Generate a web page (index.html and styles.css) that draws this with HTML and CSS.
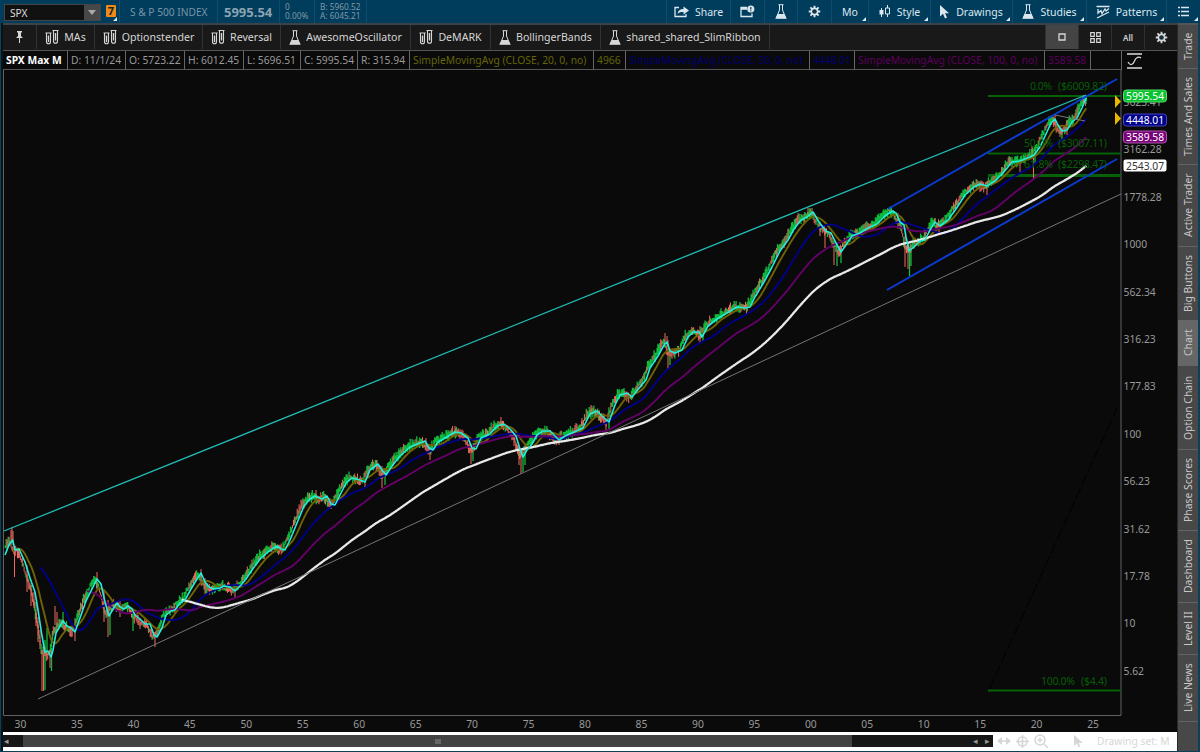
FILE: index.html
```html
<!DOCTYPE html>
<html lang="en">
<head>
<meta charset="utf-8">
<title>SPX Chart</title>
<link rel="stylesheet" href="styles.css">
</head>
<body>
<svg class="defs" width="0" height="0">
  <symbol id="flask" viewBox="0 0 12 15"><path d="M3.500.700h5M4.500 1v5L1.300 13.800h9.400L7.500 6V1" fill="none" stroke="currentColor" stroke-width="1"/><path d="M2.800 10h6.400l2.600 4.800H.2z" fill="currentColor"/></symbol>
  <symbol id="tubes" viewBox="0 0 14 16"><path d="M.5 4h6M7.500 1.500h6M1.500 4v8.700a2 2 0 004 0V4M8.500 1.500v10.800a2 2 0 004 0V1.500" fill="none" stroke="currentColor" stroke-width="1.100"/><path d="M3.500 6.500v6.500M10.500 4v7.500" stroke="currentColor" stroke-width="1.400"/></symbol>
  <symbol id="gear" viewBox="0 0 14 14"><g stroke="currentColor" stroke-width="2"><path d="M7 .8v12.4M.8 7h12.4M2.6 2.6l8.8 8.8M11.4 2.6l-8.8 8.8"/></g><circle cx="7" cy="7" r="4.2" fill="currentColor"/><circle class="hole" cx="7" cy="7" r="2.5"/></symbol>
</svg>
<div class="app">
  <header class="topbar">
    <div class="symbol-box"><span>SPX</span><i class="arrow"></i></div>
    <div class="link"><b>7</b></div>
    <div class="name">S &amp; P 500 INDEX</div>
    <div class="last">5995.54</div>
    <div class="change"><span>0</span><span>0.00%</span></div>
    <div class="bidask"><span>B: 5960.52</span><span>A: 6045.21</span></div>
    <div class="space"></div>
    <div class="btn share"><svg width="15" height="13" viewBox="0 0 15 13"><path d="M5 2.5H1v9h11V9" fill="none" stroke="currentColor" stroke-width="1.3"/><path d="M3.5 9C4 5.5 6 4 9.500 4V1.500L15 5.500 9.500 9.500V7C7 6.800 5 7.200 3.500 9z" fill="currentColor"/></svg>Share</div>
    <div class="btn alert"><svg width="15" height="13" viewBox="0 0 15 13"><path d="M7 2.500H1v9h11V8.500M1 4h6" fill="none" stroke="currentColor" stroke-width="1.3"/><circle cx="10.800" cy="4" r="3.600" fill="currentColor"/><path d="M10.800 2v2.500M10.800 5.200v1" stroke="#003c5c" stroke-width="1.2"/></svg></div>
    <div class="btn lab"><svg width="12" height="15"><use href="#flask"/></svg></div>
    <div class="btn cog"><svg width="13" height="13"><use href="#gear"/></svg></div>
    <div class="btn mo menu">Mo</div>
    <div class="btn style menu"><svg width="12" height="13" viewBox="0 0 12 13"><path d="M2.500 3v9M8.500 0v12" stroke="currentColor"/><path d="M.5 5h4v4.500h-4z" fill="currentColor"/><path d="M6.500 3h4v6h-4z" fill="#003c5c" stroke="currentColor"/></svg>Style</div>
    <div class="btn draw menu"><svg width="10" height="14" viewBox="0 0 10 14"><path d="M0 0v11.500l3-2.700L5 13.500l2-1-2-4.200h4z" fill="currentColor"/></svg>Drawings</div>
    <div class="btn studies menu"><svg width="12" height="15"><use href="#flask"/></svg>Studies</div>
    <div class="btn patterns menu"><svg width="14" height="14" viewBox="0 0 14 14"><path d="M.5 1.500h13M1 13L13 7M2 4v4l3-2.500 1 3L9 4l1 2 3-2.500" fill="none" stroke="currentColor" stroke-width="1.3"/></svg>Patterns</div>
    <div class="btn list menu"><svg width="11" height="11" viewBox="0 0 11 11"><path d="M0 1.500h2M3 1.500h8M0 5.500h2M3 5.500h8M0 9.500h2M3 9.500h8" stroke="currentColor" stroke-width="1.4"/></svg></div>
  </header>
  <div class="body">
    <main class="main">
      <nav class="toolbar">
        <div class="tool pin"><svg width="7" height="12" viewBox="0 0 7 12"><path d="M1 0h5v1L5 2v3l2 2H0l2-2V2L1 1zM3 7h1v5H3z" fill="currentColor"/></svg></div>
        <div class="tool t1"><svg width="14" height="16"><use href="#tubes"/></svg>MAs</div>
        <div class="tool t2"><svg width="14" height="16"><use href="#tubes"/></svg>Optionstender</div>
        <div class="tool t3"><svg width="14" height="16"><use href="#tubes"/></svg>Reversal</div>
        <div class="tool t4"><svg width="12" height="15"><use href="#flask"/></svg>AwesomeOscillator</div>
        <div class="tool t5"><svg width="14" height="16"><use href="#tubes"/></svg>DeMARK</div>
        <div class="tool t6"><svg width="12" height="15"><use href="#flask"/></svg>BollingerBands</div>
        <div class="tool t7"><svg width="12" height="15"><use href="#flask"/></svg>shared_shared_SlimRibbon</div>
        <div class="space"></div>
        <div class="view active"><svg width="8" height="8"><path d="M1 1h6v6H1z" fill="none" stroke="currentColor" stroke-width="1.300"/></svg></div>
        <div class="view"><svg width="11" height="11"><path d="M.7.700h3.600v3.600H.7zM6.700.700h3.600v3.600H6.700zM.7 6.700h3.600v3.600H.7zM6.700 6.700h3.600v3.600H6.700z" fill="none" stroke="currentColor" stroke-width="1.200"/></svg></div>
        <div class="view all">All</div>
        <div class="view"><svg width="13" height="13"><use href="#gear"/></svg></div>
      </nav>
      <div class="info">
        <b class="i0">SPX Max M</b><span class="i1">D: 11/1/24</span><span class="i2">O: 5723.22</span><span class="i3">H: 6012.45</span><span class="i4">L: 5696.51</span><span class="i5">C: 5995.54</span><span class="i6">R: 315.94</span><span class="i7 olive">SimpleMovingAvg (CLOSE, 20, 0, no)</span><span class="i8 olive">4966</span><span class="i9 navy">SimpleMovingAvg (CLOSE, 50, 0, no)</span><span class="i10 navy">4448.01</span><span class="i11 plum">SimpleMovingAvg (CLOSE, 100, 0, no)</span><span class="i12 plum">3589.58</span><span class="i13"></span>
        <div class="scale"><svg width="15" height="16"><path d="M0 1h15M0 15h15" stroke="currentColor" stroke-width="1.600"/><path d="M1 9c2 4 5 3 6.500-1S12 3.500 14 5" fill="none" stroke="currentColor" stroke-width="1.200"/></svg></div>
      </div>
      <svg class="chart" id="chart" width="1174" height="662" viewBox="3 70 1174 662">
        <path d="M3.500 70V715.500H1121V70" class="frame"/>
        <path d="M989 690L1117 408" class="ghost"/>
        <g class="fib"><path d="M988 96h133M988 153.500h133M988 690.500h133"/><path d="M988 175.500h133" class="thick"/></g>
        <g id="candles"></g>
        <g id="averages"></g>
        <path d="M38 699L1121 194" class="support"/>
        <path d="M4 531L1086 95" class="resist"/>
        <path d="M888 209L1117 79M887 290L1117 159" class="channel"/>
        <path d="M1055 115L1085 121" class="support"/>
        <g class="fibtext"><text x="1030" y="90" textLength="22">0.0%</text><text x="1058" y="90" textLength="49">($6009.82)</text><text x="1024" y="147" textLength="29">50.0%</text><text x="1058" y="147" textLength="49">($3007.11)</text><text x="1024" y="168" textLength="29">61.8%</text><text x="1058" y="168" textLength="49">($2298.47)</text><text x="1041" y="685" textLength="34">100.0%</text><text x="1081" y="685" textLength="26">($4.4)</text></g>
        <path d="M1115 95l6 6.500-6 6.500zM1115 112l6 6.500-6 6.500z" fill="#e8b800"/>
        <g class="axis" id="axis"></g>
        <g class="tags">
          <rect x="1123.500" y="90" width="43" height="12" rx="3" fill="#08c22e" stroke="#54dc6c"/><text x="1126" y="100">5995.54</text>
          <rect x="1123.500" y="114" width="43" height="12" rx="3" fill="#00008c" stroke="#4545b8"/><text x="1126" y="124">4448.01</text>
          <rect x="1123.500" y="131" width="43" height="12" rx="3" fill="#780078" stroke="#ad55ad"/><text x="1126" y="141">3589.58</text>
          <rect x="1123.500" y="159.500" width="43" height="12" rx="2" fill="#fff"/><text x="1126" y="169.500" class="dark">2543.07</text>
        </g>
      </svg>
      <footer class="bottom">
        <div class="scroll"><i class="left">◂</i><div class="thumb"><i></i></div><div class="rest"><i>◂</i><i>▸</i></div></div>
        <div class="drawset">
          <svg width="90" height="16" viewBox="0 0 90 16"><g fill="none" stroke="#d6d6d6" stroke-width="1.500"><path d="M3 8h9"/><circle cx="25.500" cy="8.500" r="4.500"/><path d="M25.500 2v13M19 8.500h13"/><circle cx="43" cy="7" r="5"/><path d="M47 11l4 4M40.500 7h5M43 4.500v5"/></g><path d="M5 4L0 8l5 4zM9 4l5 4-5 4zM77 2v11l2.800-2.400 1.800 3.700 1.800-.8-1.700-3.600H86z" fill="#d6d6d6"/></svg>
          <span>Drawing set: M</span>
        </div>
      </footer>
    </main>
    <aside class="tabs">
      <div class="tab a">Trade</div><div class="tab b">Times And Sales</div><div class="tab c">Active Trader</div><div class="tab d">Big Buttons</div><div class="tab e on">Chart</div><div class="tab f">Option Chain</div><div class="tab g">Phase Scores</div><div class="tab h">Dashboard</div><div class="tab i">Level II</div><div class="tab j">Live News</div>
    </aside>
  </div>
</div>
<script src="chart.js"></script>
</body>
</html>
```
FILE: styles.css
```css
* { box-sizing: border-box; }
body { margin: 0; background: #0a0a0a; font-family: "Noto Sans", "Open Sans", sans-serif; font-size: 10.600px; color: #d6d6d6; overflow: hidden; }
.defs { position: absolute; }
svg { flex: none; }
.app { width: 1200px; height: 752px; display: flex; flex-direction: column; background: #0a4058; }
.topbar { height: 23px; display: flex; align-items: stretch; background: #003c5c; padding-left: 4px; }
.topbar > div { border-right: 1px solid #124c6c; }
.topbar .symbol-box { width: 97px; height: 17px; margin-top: 4px; background: #111; border: 1px solid #444; display: flex; justify-content: space-between; align-items: center; padding-left: 5px; font-size: 10.200px; color: #ddd; }
.arrow { width: 16px; height: 15px; background: #484848; display: flex; align-items: center; justify-content: center; }
.arrow::before { content: ""; border: 4px solid transparent; border-top: 5px solid #aaa; border-bottom: 0; }
.link { width: 19px; padding: 5px 0 0 5px; position: relative; }
.link b { display: block; width: 10px; height: 12px; line-height: 12px; background: #f28a16; color: #16242d; text-align: center; border-radius: 1px; font-size: 11px; }
.link::after, .menu::after { content: ""; position: absolute; right: 2px; bottom: 2px; border-left: 4px solid transparent; border-bottom: 4px solid #d8e8f0; }
.name { width: 98px; padding-left: 10px; line-height: 24px; color: #7895a7; font-size: 10.200px; white-space: nowrap; }
.last { width: 62px; line-height: 25px; padding-left: 6px; font-size: 13px; font-weight: bold; color: #8ba3b1; }
.change, .bidask { display: flex; flex-direction: column; font-size: 8.300px; line-height: 9px; padding: 2px 0 0 5px; color: #8098a6; }
.change { width: 35px; }
.bidask { width: 52px; white-space: nowrap; }
.space { flex: 1; }
.topbar .btn { display: flex; align-items: center; justify-content: center; gap: 6px; position: relative; color: #dbe7ee; font-size: 10.500px; white-space: nowrap; }
.share { width: 64px; } .alert { width: 34px; } .lab { width: 33px; } .cog { width: 34px; } .mo { width: 37px; }
.style { width: 62px; } .draw { width: 82px; } .studies { width: 74px; } .patterns { width: 80px; } .topbar .list { width: 33px; border: 0; }
.hole { fill: #123242; }
.toolbar .hole { fill: #191919; }
.body { flex: 1; display: flex; min-height: 0; padding: 0 2px 1px 1px; }
.main { width: 1176px; flex: none; display: flex; flex-direction: column; padding-left: 2px; background: #0a1418; }
.toolbar { height: 28px; display: flex; background: #191919; border-top: 2px solid #3b4248; border-bottom: 1px solid #555; padding-bottom: 1px; }
.tool { border-right: 1px solid #333; display: flex; align-items: center; justify-content: center; gap: 5px; white-space: nowrap; }
.pin { width: 34px; } .t1 { width: 58px; } .t2 { width: 108px; } .t3 { width: 78px; } .t4 { width: 130px; } .t5 { width: 80px; } .t6 { width: 110px; } .t7 { width: 169px; }
.view { width: 33px; border-left: 1px solid #303030; display: flex; align-items: center; justify-content: center; }
.view.active { background: #444; }
.all { font-size: 8px; font-weight: 600; }
.info { height: 19px; display: flex; background: #0a0a0a; line-height: 18px; color: #999; font-size: 10.300px; }
.info b, .info span { border-right: 1px solid #666; border-bottom: 1px solid #555; padding-left: 3px; white-space: nowrap; overflow: hidden; }
.info b { color: #fff; }
.i0 { width: 65px; } .i1 { width: 58px; } .i2 { width: 59px; } .i3 { width: 59px; } .i4 { width: 57px; } .i5 { width: 57px; } .i6 { width: 52px; }
.i7 { width: 184px; } .i8 { width: 32px; } .i9 { width: 184px; } .i10 { width: 45px; } .i11 { width: 190px; } .i12 { width: 46px; } .i13 { width: 31px; }
.olive { color: #646408; } .navy { color: #000070; } .plum { color: #5c005c; }
.scale { flex: 1; padding: 2px 0 0 5px; color: #ddd; line-height: 0; }
.chart { display: block; background: #0a0a0a; }
.chart path { fill: none; }
.chart path[fill] { fill: #e8b800; }
.chart .frame { stroke: #606060; }
.ghost { stroke: #000; stroke-width: 1.200; stroke-dasharray: 12 3; opacity: .75; }
.fib { stroke: #076107; stroke-width: 2; } .thick { stroke-width: 3; }
.support { stroke: #757575; }
.resist { stroke: #20bdb5; stroke-width: 1.300; }
.channel { stroke: #0a3bd2; stroke-width: 2; }
.fibtext { fill: #075d07; font-size: 10.500px; }
.axis { fill: #999; font-size: 10.300px; }
.tags { fill: #fff; font-size: 10.300px; } .tags .dark { fill: #333; }
.bottom { height: 19px; background: #fff; display: flex; align-items: flex-start; padding-top: 3px; }
.scroll { width: 990px; height: 12px; background: #171717; display: flex; font-size: 9px; line-height: 11px; color: #999; }
.scroll i { font-style: normal; }
.left { width: 20px; padding-left: 1px; }
.thumb { width: 829px; background: #424242; display: flex; justify-content: center; align-items: center; }
.thumb i { width: 6px; height: 5px; background: #666; }
.rest { flex: 1; display: flex; justify-content: flex-end; gap: 7px; padding-right: 3px; }
.drawset { flex: 1; height: 16px; display: flex; align-items: center; gap: 10px; padding-left: 4px; margin-top: -2px; color: #d6d6d6; white-space: nowrap; font-size: 10.300px; }
.tabs { flex: 1; background: #484848; border-left: 1px solid #292929; border-top: 2px solid #555; }
.tab { writing-mode: vertical-rl; transform: rotate(180deg); width: 100%; display: flex; align-items: center; justify-content: center; border-top: 1px solid #646464; line-height: 18px; color: #c7c7c7; font-size: 10.400px; white-space: nowrap; }
.on { background: #666; }
.a { height: 44px; } .b { height: 96px; } .c { height: 82px; } .d { height: 74px; } .e { height: 45px; } .f { height: 84px; } .g { height: 81px; } .h { height: 72px; } .i { height: 52px; } .j { height: 67px; }
```
FILE: chart.js
```javascript
const NS = "http://www.w3.org/2000/svg";
// Fast average of the index, as x,y knots on the log scale
const fast = `-6,568 5,555 9,545 12.700,540 15,550 19,549 25,562 30,578 35,592 38,610 42,636 45,652 48,651 51,657 53,650 56,633 60,626 63,621 67,626 71,628 75,632 80,618 86,601 91,591 97,579 101,584 105,602 109,616 113,609 117,603 120,607 124,609 128,606 132,609 135,615 140,619 145,624 150,624 154,635 157,637 162,628 166,615 171,611 175,610 180,603 185,600 191,589 197,579 201,573 205,582 209,587 214,589 220,588 224,586 230,587 235,591 241,585 246,579 252,570 260,559 268,552 277,546 281,549 285,550 290,540 297,523 304,506 310,499 315,496 322,499 327,496 331,504 335,505 340,495 346,483 352,478 360,480 365,482 370,470 378,464 382,470 386,475 392,466 400,456 410,447 420,443 425,441 429,448 433,450 438,442 447,437 455,432 461,433 468,438 472,448 476,449 481,438 490,434 497,426 504,424 510,429 516,436 520,449 523,457 527,450 532,444 537,435 543,431 550,431 556,437 559,440 565,436 572,433 583,428 590,414 597,411 603,417 609,422 615,405 620,395 627,393 632,397 640,387 646,380 650,368 658,356 664,345 667,342 670,351 675,353 682,350 688,337 693,332 699,332 702,337 708,326 717,319 727,313 737,307 745,308 750,307 755,297 764,282 772,267 780,251 788,240 794,229 801,220 807,217 813,212 819,222 826,231 831,233 836,243 841,252 846,245 852,236 860,233 868,228 877,224 885,216 892,211 896,213 900,222 904,225 906,237 909,251 914,247 920,241 925,240 930,230 935,222 940,226 948,220 956,209 965,195 974,187 980,184 987,186 995,181 1003,173 1012,162 1020,161 1030,157 1034,155 1040,147 1046,134 1051,123 1055,119 1058,125 1062,131 1067,130 1072,122 1077,118 1082,108 1086,98`
  .split(" ").map(p => p.split(",").map(Number));
function at(x) {
  for (let i = 1; i < fast.length; i++) {
    if (x <= fast[i][0]) {
      const [a, b] = fast[i - 1], [c, d] = fast[i];
      return b + (d - b) * (x - a) / (c - a);
    }
  }
  return fast[fast.length - 1][1];
}
// Notable swings: x, top, bottom, direction (1 = up month)
const swings = [[11,530,542,0],[12,527,540,0],[13,531,545,0],[14.500,552,577,0],[27,565,592,0],[31,585,606,0],[34,592,608,0],[36,602,626,0],[38,617,642,0],[40,630,649,0],[42,650,691,0],[43.500,655,691,0],[45,640,690,1],[47,628,655,1],[50,650,668,0],[51.500,648,671,1],[55,606,625,0],[57,612,630,0],[63,612,622,1],[70,626,636,0],[75,630,641,0],[97,572,580,0],[104,590,622,0],[108,600,637,0],[110,615,635,1],[120,600,617,0],[133,613,631,1],[155,632,647,0],[201,569,577,0],[205,578,594,0],[235,587,598,0],[316,490,499,0],[331,500,509,0],[365,480,487,0],[377,460,467,1],[382,466,488,0],[385,472,485,1],[426,438,447,0],[430,447,460,0],[455,426,434,0],[471,444,464,0],[473,447,461,1],[501,417,426,0],[514,433,446,0],[519,446,465,0],[521,450,474,0],[523,452,472,1],[525,448,465,1],[559,436,445,0],[582,418,430,0],[591,405,415,0],[606,420,430,0],[609,418,429,1],[665,333,344,0],[667,336,346,0],[668,340,369,0],[670,355,365,1],[700,326,343,0],[703,333,341,1],[808,208,217,0],[812,208,214,0],[820,223,236,0],[825,230,248,0],[834,243,265,0],[837,250,266,1],[841,252,263,1],[898,213,224,0],[905,236,267,0],[908,246,269,0],[909.500,248,276,1],[911,246,266,1],[935,218,224,0],[939,224,233,0],[980,184,192,0],[987,187,195,0],[1010,157,166,0],[1020,162,172,0],[1032,146,157,0],[1033.500,158,178,0],[1035,152,163,1],[1055,115,124,0],[1060,128,137,0],[1062,130,139,1],[1067,127,135,0],[1086,96,104,1]];
let seed = 19;
const rnd = () => (seed = (seed * 16807) % 2147483647) / 2147483647;
function add(id, d, color, width) {
  const p = document.createElementNS(NS, "path");
  p.setAttribute("d", d);
  p.style.stroke = color;
  p.style.strokeWidth = width;
  p.style.strokeLinejoin = "round";
  document.getElementById(id).appendChild(p);
}
const step = 0.9417, prices = [];
let up = "", down = "";
for (let x = -6; x <= 1086.500; x += step) {
  const y = at(x + 4);
  prices.push([x, 1000 * 10 ** ((245 - y) / 189.2)]);
  if (x < 5) continue;
  const slope = at(x + 3) - at(x - 3), h = 1.500 + rnd() * 4;
  const mid = Math.max(at(x + 3) + (rnd() - 0.5) * 3.500, 95 + h);
  const bar = `M${x.toFixed(1)} ${(mid - h).toFixed(1)}V${(mid + h).toFixed(1)}`;
  if (rnd() < (slope < -0.5 ? 0.75 : slope > 1 ? 0.2 : 0.5)) up += bar; else down += bar;
}
for (const [x, a, b, rise] of swings) {
  const bar = `M${x} ${a}V${b}`;
  if (rise) up += bar; else down += bar;
}
add("candles", up, "#10b83c", 1.300);
add("candles", down, "#ee6b60", 1);
function average(n, color, width) {
  let sum = 0, d = "";
  prices.forEach(([x, p], i) => {
    sum += p;
    if (i >= n) sum -= prices[i - n][1];
    if (i >= n - 1) d += `${d ? "L" : "M"}${x.toFixed(1)} ${(245 - 189.2 * Math.log10(sum / n / 1000)).toFixed(1)}`;
  });
  add("averages", d, color, width);
}
average(20, "#716204", 1.900);
average(50, "#00008a", 1.900);
average(100, "#640068", 1.900);
average(200, "#e8e8e8", 2.300);
add("averages", "M" + fast.slice(1).map(p => p.join(" ")).join("L"), "#22eedc", 1.600);
function label(x, y, text, anchor) {
  const t = document.createElementNS(NS, "text");
  t.setAttribute("x", x);
  t.setAttribute("y", y);
  t.setAttribute("text-anchor", anchor);
  t.textContent = text;
  document.getElementById("axis").appendChild(t);
}
["5623.41", "3162.28", "1778.28", "1000", "562.34", "316.23", "177.83", "100", "56.23", "31.62", "17.78", "10", "5.62"].forEach((v, i) => label(1123.500, 106 + i * 47.400, v, "start"));
["30", "35", "40", "45", "50", "55", "60", "65", "70", "75", "80", "85", "90", "95", "00", "05", "10", "15", "20", "25"].forEach((v, i) => label(20.500 + i * 56.450, 728, v, "middle"));
```
